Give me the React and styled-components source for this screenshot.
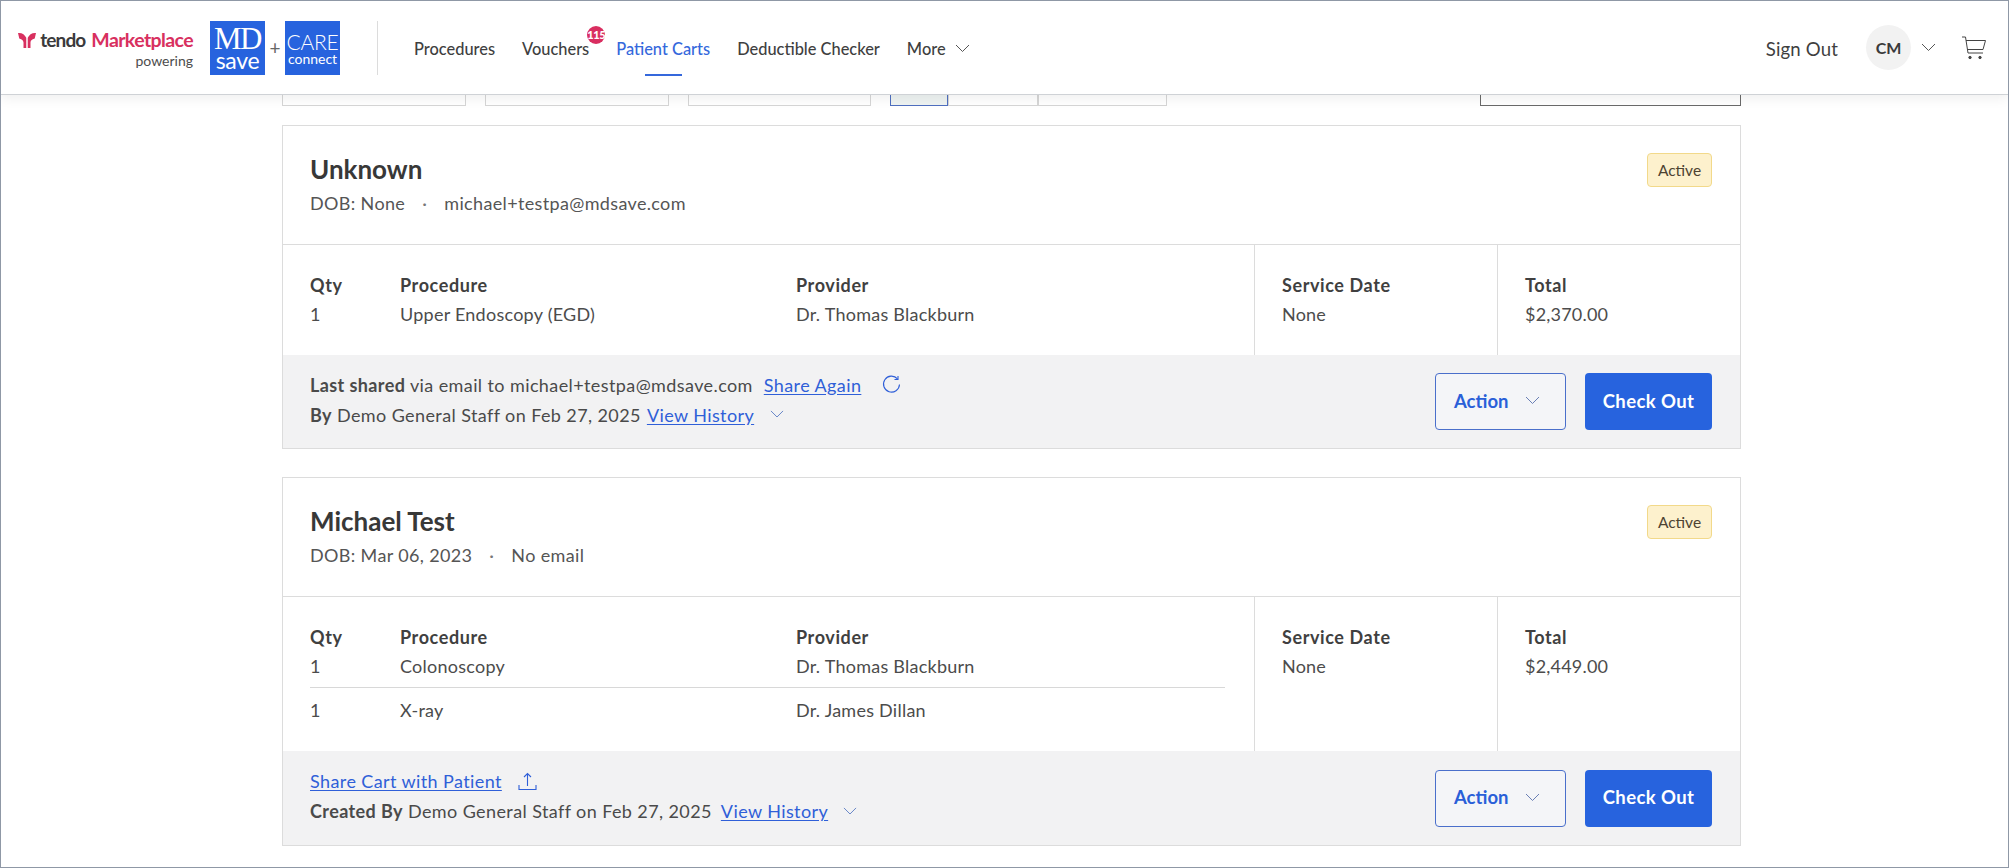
import React from "react";
import styled, { createGlobalStyle } from "styled-components";

const Global = createGlobalStyle`
  html, body { margin: 0; padding: 0; background: #fff; }
  body { font-family: Lato, "Open Sans", sans-serif; color: #3d3d3d; }
`;

const Frame = styled.div`
  width: 2009px; height: 868px; box-sizing: border-box;
  border: 1px solid #8f98a6; overflow: hidden; background: #fff;
`;
const Header = styled.header`
  position: relative; z-index: 2; height: 94px; box-sizing: border-box;
  display: flex; align-items: center; padding-left: 19px; padding-right: 22px;
  background: #fff; border-bottom: 1px solid #cfd2d6; box-shadow: 0 3px 12px rgba(0,0,0,.07);
`;
const BrandText = styled.div`
  width: 173px; padding-top: 3px; display: flex; flex-direction: column; align-items: flex-end;
`;
const BrandLine = styled.div`
  display: flex; align-items: center; font-size: 19.5px; font-weight: 700; line-height: 24px; letter-spacing: -.6px; white-space: nowrap;
  svg { margin-right: 4px; }
`;
const Tendo = styled.span` color: #3a3a3c; margin-right: 6px; font-size: 19px; letter-spacing: -.9px; `;
const Market = styled.span` color: #d8305f; `;
const Powering = styled.div` font-size: 14px; color: #4d4d4d; line-height: 18px; `;
const BrandGap = styled.div` width: 17px; flex: none; `;
const LogoBox = styled.div`
  width: 55px; height: 54px; background: #2763de; color: #fff; display: flex; flex-direction: column;
  align-items: center; justify-content: center; flex: none;
`;
const MdTop = styled.div` font-family: "Liberation Serif", serif; font-size: 31px; line-height: 25px; letter-spacing: -1.5px; `;
const MdBottom = styled.div` font-size: 23px; line-height: 19px; letter-spacing: -.3px; `;
const CareTop = styled.div` font-size: 21px; font-weight: 300; line-height: 21px; letter-spacing: -.2px; `;
const CareBottom = styled.div` font-size: 14px; font-weight: 400; line-height: 13px; `;
const Plus = styled.div` width: 20px; text-align: center; color: #666; font-size: 19px; `;
const VDivider = styled.div` width: 1px; height: 54px; background: #dcdcdc; margin: 0 36px 0 37px; flex: none; `;
const Nav = styled.nav` display: flex; align-items: center; gap: 27px; height: 100%; box-sizing: border-box; padding-top: 2px; `;
const NavItem = styled.a`
  position: relative; font-size: 16.4px; font-weight: 500; line-height: 90px; white-space: nowrap;
  color: ${p => (p.$active ? "#3568dc" : "#3f3f3f")}; display: flex; align-items: center; gap: 9px;
`;
const ActiveBar = styled.span`
  position: absolute; left: 29px; bottom: 18px; width: 37px; height: 2px; background: #3568dc;
`;
const CountBadge = styled.span`
  position: absolute; top: 22px; right: -16px; width: 18px; height: 18px; border-radius: 50%; background: #d92e60;
  color: #fff; font-size: 11px; font-weight: 900; line-height: 18px; text-align: center; letter-spacing: -.4px;
`;
const HeaderRight = styled.div` margin-left: auto; display: flex; align-items: center; `;
const SignOut = styled.a` font-size: 18.6px; color: #3f3f3f; margin-right: 28px; padding-top: 2px; letter-spacing: .15px; `;
const Avatar = styled.div`
  width: 45px; height: 45px; border-radius: 50%; background: #f2f2f2; display: flex; align-items: center; justify-content: center;
  font-size: 16px; font-weight: 700; color: #3a3a3a; margin-right: 10px;
`;
const CartWrap = styled.div` margin-left: 26px; display: flex; `;

const Main = styled.main` width: 1459px; margin-left: 281px; `;
const Tabs = styled.div` position: relative; height: 11px; display: flex; margin-bottom: 19px; `;
const Tab = styled.div`
  box-sizing: border-box; height: 11px; width: ${p => p.$w}px; margin-right: ${p => p.$gap || 0}px;
  border: 1px solid ${p => (p.$dark ? "#6a6a6a" : p.$active ? "#4f6fc0" : "#d6d6d6")}; border-top: none;
  background: ${p => (p.$active ? "#eef3f2" : "#fff")};
`;
const Card = styled.section`
  border: 1px solid #dcdcdc; margin-bottom: 28px; background: #fff;
`;
const CardHead = styled.div`
  height: 119px; box-sizing: border-box; padding: 26px 28px 0 27px; display: flex; justify-content: space-between;
  border-bottom: 1px solid #dcdcdc;
`;
const Name = styled.h2` margin: 0; font-size: 26px; line-height: 34px; font-weight: 700; color: #383838; `;
const Meta = styled.div` margin-top: 2px; font-size: 18px; letter-spacing: .35px; line-height: 30px; color: #555; display: flex; `;
const Dot = styled.span` margin: 0 17px; color: #777; `;
const Status = styled.div`
  width: 65px; height: 34px; margin-top: 1px; box-sizing: border-box; border: 1px solid #f2d98a; border-radius: 4px; background: #fdf1cd;
  font-size: 15.5px; line-height: 32px; text-align: center; color: #4d4332;
`;
const Body = styled.div` display: flex; height: ${p => p.$h}px; `;
const Items = styled.div` flex: 1; padding: 25px 29px 0 27px; `;
const Row = styled.div`
  display: grid; grid-template-columns: 90px 396px 1fr; font-size: 18px; letter-spacing: .25px; line-height: 30px; color: #4c4c4c;
  ${p => p.$split && "margin-top: 6px; padding-top: 7px; border-top: 1px solid #d8d8d8;"}
`;
const Label = styled.div` font-weight: 700; color: #404040; letter-spacing: .6px; margin-bottom: -1px; `;
const Side = styled.div`
  width: ${p => p.$w}px; box-sizing: border-box; flex: none; border-left: 1px solid #dcdcdc; padding: 25px 0 0 27px;
  font-size: 18px; letter-spacing: .2px; line-height: 30px; color: #4c4c4c;
`;
const Foot = styled.div`
  background: #f2f2f3; height: ${p => p.$h}px; box-sizing: border-box; padding: 0 28px 0 27px; display: flex; align-items: center; justify-content: space-between;
`;
const FootText = styled.div` font-size: 18px; letter-spacing: .4px; line-height: 30px; color: #4a4a4a; margin-top: -4px; `;
const FootLine = styled.div` display: flex; align-items: center; white-space: pre; `;
const Link = styled.a`
  color: #2f5fd8; text-decoration: underline; text-underline-offset: 2px; margin-left: ${p => p.$ml ?? 10}px;
`;
const IconGap = styled.span` display: inline-flex; margin-left: ${p => p.$ml}px; `;
const Actions = styled.div` display: flex; gap: 19px; `;
const ActionBtn = styled.button`
  width: 131px; height: 57px; box-sizing: border-box; border: 1px solid #4a6fcb; border-radius: 4px; background: #f4f5f8;
  color: #2a5fd8; font: 700 18.5px Lato, sans-serif; display: flex; align-items: center; padding: 0 0 2px 18px; gap: 17px;
`;
const CheckBtn = styled.button`
  width: 127px; height: 57px; border: none; border-radius: 4px; background: #2763de; color: #fff; font: 700 18.5px Lato, sans-serif; letter-spacing: .4px; padding: 0 0 2px;
`;

const Chevron = ({ size = 15, color = "#555" }) => (
  <svg width={size} height={size * 0.6} viewBox="0 0 15 9" fill="none" stroke={color} strokeWidth="1" style={{ flex: "none" }}>
    <path d="M1 1l6.500 6.500L14 1" />
  </svg>
);
const TendoMark = () => (
  <svg width="18" height="17" viewBox="0 0 17 16" fill="#d8305f">
    <path d="M0 1C3.500 .500 6.500 2.500 7.800 5.500V15H5.200V10C5.200 7 2.500 6.500 1.200 6z" />
    <path d="M17 1C13.500 .500 10.500 2.500 9.200 5.500V15h2.600v-5c0-3 2.700-3.500 4-4z" />
  </svg>
);
const CartIcon = () => (
  <svg width="24" height="24" viewBox="0 0 24 24" fill="none" stroke="#444" strokeWidth="1">
    <path d="M0 1h3.500l2.500 16h15" />
    <path d="M4 4.500h19.500l-2.500 9H5.500" />
    <circle cx="8" cy="21.500" r="1.200" fill="#444" />
    <circle cx="18" cy="21.500" r="1.200" fill="#444" />
  </svg>
);
const RefreshIcon = () => (
  <svg width="19" height="19" viewBox="0 0 19 19" fill="none" stroke="#2f5fd8" strokeWidth="1.100">
    <path d="M15.500 3.800A8 8 0 1 0 17.500 9.500" />
    <path d="M16 1v3.500h-3.500" />
  </svg>
);
const ShareIcon = () => (
  <svg width="19" height="19" viewBox="0 0 19 19" fill="none" stroke="#2f5fd8" strokeWidth="1.100">
    <path d="M9.500 14V1.500M6 5l3.500-3.500L13 5" />
    <path d="M1 13v4.500h17V13" />
  </svg>
);

const items = {
  one: [["1", "Upper Endoscopy (EGD)", "Dr. Thomas Blackburn"]],
  two: [["1", "Colonoscopy", "Dr. Thomas Blackburn"], ["1", "X-ray", "Dr. James Dillan"]],
};

const CartCard = ({ name, dob, contact, rows, total, bodyH, footH, children }) => (
  <Card>
    <CardHead>
      <div>
        <Name>{name}</Name>
        <Meta>DOB: {dob}<Dot>·</Dot>{contact}</Meta>
      </div>
      <Status>Active</Status>
    </CardHead>
    <Body $h={bodyH}>
      <Items>
        <Row><Label>Qty</Label><Label>Procedure</Label><Label>Provider</Label></Row>
        {rows.map((r, i) => (
          <Row key={r[1]} $split={i > 0}>
            <div>{r[0]}</div>
            <div>{r[1]}</div>
            <div>{r[2]}</div>
          </Row>
        ))}
      </Items>
      <Side $w={243}><Label>Service Date</Label><div>None</div></Side>
      <Side $w={243}><Label>Total</Label><div>{total}</div></Side>
    </Body>
    <Foot $h={footH}>
      <FootText>{children}</FootText>
      <Actions>
        <ActionBtn>Action <Chevron color="#6a7fb5" /></ActionBtn>
        <CheckBtn>Check Out</CheckBtn>
      </Actions>
    </Foot>
  </Card>
);

export default function App() {
  return (
    <Frame>
      <Global />
      <Header>
        <BrandText>
          <BrandLine><TendoMark /><Tendo>tendo</Tendo><Market>Marketplace</Market></BrandLine>
          <Powering>powering</Powering>
        </BrandText>
        <BrandGap />
        <LogoBox><MdTop>MD</MdTop><MdBottom>save</MdBottom></LogoBox>
        <Plus>+</Plus>
        <LogoBox><CareTop>CARE</CareTop><CareBottom>connect</CareBottom></LogoBox>
        <VDivider />
        <Nav>
          <NavItem>Procedures</NavItem>
          <NavItem>Vouchers<CountBadge>115</CountBadge></NavItem>
          <NavItem $active>Patient Carts<ActiveBar /></NavItem>
          <NavItem>Deductible Checker</NavItem>
          <NavItem>More <Chevron /></NavItem>
        </Nav>
        <HeaderRight>
          <SignOut>Sign Out</SignOut>
          <Avatar>CM</Avatar>
          <Chevron />
          <CartWrap><CartIcon /></CartWrap>
        </HeaderRight>
      </Header>
      <Main>
        <Tabs>
          <Tab $w={184} $gap={19} />
          <Tab $w={184} $gap={19} />
          <Tab $w={183} $gap={19} />
          <Tab $w={58} $active />
          <Tab $w={90} />
          <Tab $w={129} $gap={313} />
          <Tab $w={261} $dark />
        </Tabs>
        <CartCard name="Unknown" dob="None" contact="michael+testpa@mdsave.com" rows={items.one} total="$2,370.00" bodyH={110} footH={93}>
          <FootLine><b>Last shared</b> via email to michael+testpa@mdsave.com<Link $ml={11}>Share Again</Link><IconGap $ml={21}><RefreshIcon /></IconGap></FootLine>
          <FootLine><b>By</b> Demo General Staff on Feb 27, 2025<Link $ml={6}>View History</Link><IconGap $ml={16}><Chevron size={14} color="#5f7fc5" /></IconGap></FootLine>
        </CartCard>
        <CartCard name="Michael Test" dob="Mar 06, 2023" contact="No email" rows={items.two} total="$2,449.00" bodyH={154} footH={94}>
          <FootLine><Link $ml={0}>Share Cart with Patient</Link><IconGap $ml={16}><ShareIcon /></IconGap></FootLine>
          <FootLine><b>Created By</b> Demo General Staff on Feb 27, 2025<Link $ml={9}>View History</Link><IconGap $ml={15}><Chevron size={14} color="#5f7fc5" /></IconGap></FootLine>
        </CartCard>
      </Main>
    </Frame>
  );
}
